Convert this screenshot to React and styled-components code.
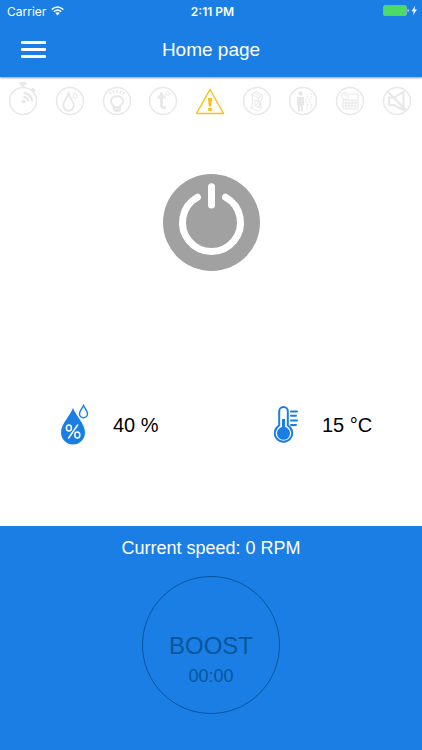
import React from 'react';
import styled, { createGlobalStyle } from 'styled-components';

const BLUE = '#1b7ee4';

export default class App extends React.Component {
  render() {
    return (
      <Page>
        <GlobalStyle />
        <Header>
          <StatusBar>
            <Carrier>
              Carrier
              <WifiIcon />
            </Carrier>
            <Clock>2:11 PM</Clock>
            <Power>
              <BatteryIcon />
            </Power>
          </StatusBar>
          <NavBar>
            <MenuButton type="button" aria-label="Menu">
              <MenuLine />
              <MenuLine />
              <MenuLine />
            </MenuButton>
            <Title>Home page</Title>
          </NavBar>
        </Header>
        <Indicators>
          {indicators.map(({ name, active, icon }) => (
            <Indicator key={name} $active={active}>
              <svg width="34" height="38" viewBox="0 0 34 38" role="img" aria-label={name}>
                {!active && <circle cx="17" cy="21" r="13.5" strokeWidth="1.5" />}
                {icon}
              </svg>
            </Indicator>
          ))}
        </Indicators>
        <Main>
          <PowerButton type="button" aria-label="Power">
            <svg width="97" height="97" viewBox="0 0 97 97">
              <path d="M34.5 23.2A29 29 0 1 0 62.5 23.2" />
              <path d="M48.5 12.8V31" />
            </svg>
          </PowerButton>
        </Main>
        <Readings>
          <Reading>
            <HumidityIcon />
            40 %
          </Reading>
          <Reading>
            <ThermometerIcon />
            15 °C
          </Reading>
        </Readings>
        <SpeedPanel>
          <Speed>Current speed: 0 RPM</Speed>
          <BoostButton type="button">
            <BoostLabel>BOOST</BoostLabel>
            <BoostTime>00:00</BoostTime>
          </BoostButton>
        </SpeedPanel>
      </Page>
    );
  }
}

const WifiIcon = () => (
  <svg width="13" height="10" viewBox="0 0 13 10" fill="none" stroke="#fff" strokeWidth="1.5">
    <path d="M.7 3.6Q6.5-1.7 12.3 3.6" />
    <path d="M2.8 5.8Q6.5 2.5 10.2 5.8" />
    <path d="M4.3 7.1Q6.5 5.4 8.7 7.1L6.5 9.5Z" fill="#fff" stroke="none" />
  </svg>
);

const BatteryIcon = () => (
  <svg width="35" height="12" viewBox="0 0 35 12">
    <rect x=".5" y=".5" width="23" height="10" rx="1.5" fill="#4cd964" stroke="#6fb2c4" />
    <path d="M24.5 4q1.5.2 1.5 1.5t-1.5 1.5z" fill="#b5dcf8" />
    <path d="M32.2.8L28.5 6.2h2.3l-.9 4 4.1-5.6h-2.4z" fill="#fff" />
  </svg>
);

const HumidityIcon = () => (
  <svg width="28" height="41" viewBox="0 0 28 41" fill="none">
    <path d="M12 4C9 12 0 20 0 28.5a12 12 0 0 0 24 0C24 20 15 12 12 4Z" fill={BLUE} />
    <path
      d="M22.5 1.5C21 4.8 18.5 6.9 18.5 9.7a4 4 0 0 0 8 0c0-2.8-2.5-4.9-4-8.2Z"
      stroke={BLUE}
      strokeWidth="1.5"
    />
    <g stroke="#fff" strokeWidth="1.5">
      <ellipse cx="7.9" cy="24" rx="2.5" ry="3" />
      <ellipse cx="16.3" cy="31" rx="2.5" ry="3" />
      <path d="M17 20.5L7.3 34.5" />
    </g>
  </svg>
);

const ThermometerIcon = () => (
  <svg width="24" height="38" viewBox="0 0 24 38" fill="none" stroke={BLUE} strokeWidth="2">
    <path d="M5.2 19.5V5.3a4.3 4.3 0 0 1 8.6 0V19.5a8.7 8.7 0 1 1-8.6 0Z" />
    <circle cx="9.5" cy="27.3" r="6.5" fill={BLUE} stroke="none" />
    <path d="M9.5 13V27" strokeWidth="3" />
    <path d="M17 5.5H23M17 9.8H22M17 14.5H23M17 19H22" strokeLinecap="round" />
  </svg>
);

const indicators = [
  {
    name: 'Timer',
    icon: (
      <>
        <path d="M13.5 3.5h7M17 3v5M26 8.5l3 3" strokeWidth="3" />
        <path d="M17.5 13a8.5 8.5 0 0 1 8.5 8.5M17.5 17a4.5 4.5 0 0 1 4.5 4.5" strokeWidth="2.5" />
        <circle cx="17.5" cy="21.5" r="1.5" fill="currentColor" />
      </>
    ),
  },
  {
    name: 'Humidity',
    icon: (
      <>
        <path d="M15.5 13.5C14 18 10.3 21 10.3 25.5a5.2 5.2 0 0 0 10.4 0C20.7 21 17 18 15.5 13.5Z" strokeWidth="2" />
        <path d="M22 12.5q-4.3 5.5 0 5.7 4.3-.2 0-5.7Z" />
      </>
    ),
  },
  {
    name: 'Light',
    icon: (
      <>
        <path
          d="M14 30v-4.2c-5.2-3-3.2-9.6 3-9.6s8.2 6.6 3 9.6V30q-3 3-6 0ZM14 27h6M14 29.5h6"
          strokeWidth="2"
        />
        <path d="M9.5 12l1.7 2.5M13 10.5l1 3M17 10v3M21 10.5l-1 3M24.5 12l-1.7 2.5" strokeWidth="1.5" />
      </>
    ),
  },
  {
    name: 'Temperature',
    icon: (
      <>
        <path d="M15.5 12.5v12.5q0 3.5 4.5 2.3M11.5 17h8" strokeWidth="3" />
        <circle cx="21.5" cy="13.5" r="1.8" />
      </>
    ),
  },
  {
    name: 'Warning',
    active: true,
    icon: (
      <>
        <path d="M17 9.5L30.5 33.5H3.5Z" strokeLinejoin="round" strokeWidth="1.5" />
        <path d="M14.9 18h4.2l-.9 8.5h-2.4zM15.2 28h3.6v3h-3.6z" fill="currentColor" stroke="none" />
      </>
    ),
  },
  {
    name: 'Filter',
    icon: (
      <>
        <path d="M12 14l4-3 6 4v4l-2 3 1 7-3 2-7-3q3-6 1-14ZM12 14l6 4 4-3M18 18v5l-3 3" />
        <path d="M15 20l5 2-1 6-4-3zM14 12.5l6 3.5" />
      </>
    ),
  },
  {
    name: 'Presence',
    icon: (
      <>
        <circle cx="14.5" cy="13.5" r="2.3" fill="currentColor" stroke="none" />
        <path d="M11 17h7v8h-1v6.5h-2v-5.5h-1V31.5h-2v-6.5h-1Z" fill="currentColor" stroke="none" />
        <path d="M20.5 13q2 2.5 0 5t0 5 0 6M24.5 13q2 2.5 0 5t0 5 0 6" strokeDasharray="2 1" />
      </>
    ),
  },
  {
    name: 'Schedule',
    icon: (
      <>
        <circle cx="12" cy="16" r="3.5" />
        <path d="M12 14v2h2M16 14h9v15H10v-9M10 20h15M10 23h15M10 26h15M13 20v9M16 20v9M19 20v9M22 20v9" />
      </>
    ),
  },
  {
    name: 'Muted',
    icon: (
      <>
        <path d="M9 17.5h5l9.5-5.5v18L14 25H9Z" strokeWidth="2" />
        <path d="M7.5 11.5L26.5 30.5" strokeWidth="2" />
      </>
    ),
  },
];

const GlobalStyle = createGlobalStyle`
  * {
    box-sizing: border-box;
  }

  body {
    margin: 0;
    background: #fff;
    font-family: 'Liberation Sans', Arial, sans-serif;
  }

  button {
    padding: 0;
    border: 0;
    background: transparent;
    font-family: inherit;
    cursor: pointer;
  }

  svg {
    display: block;
  }
`;

const Page = styled.div`
  display: flex;
  flex-direction: column;
  min-height: 100vh;
`;

const Header = styled.header`
  background: ${BLUE};
  color: #fff;
  box-shadow: 0 1px 2px rgba(0, 0, 0, 0.4);
`;

const StatusBar = styled.div`
  display: grid;
  grid-template-columns: 1fr auto 1fr;
  align-items: center;
  height: 22px;
  padding: 0 4px 0 7px;
  font-family: Inter, sans-serif;
  font-size: 12px;
`;

const Carrier = styled.div`
  display: flex;
  align-items: center;
  gap: 5px;
`;

const Clock = styled.div`
  font-weight: 600;
`;

const Power = styled.div`
  display: flex;
  justify-content: flex-end;
`;

const NavBar = styled.nav`
  display: grid;
  grid-template-columns: 1fr auto 1fr;
  align-items: center;
  height: 55px;
  padding: 0 21px;
`;

const MenuButton = styled.button`
  display: flex;
  flex-direction: column;
  gap: 4px;
  width: 25px;
`;

const MenuLine = styled.span`
  height: 3px;
  border-radius: 1px;
  background: #fff;
`;

const Title = styled.h1`
  margin: 0;
  font-size: 19px;
  font-weight: 400;
  line-height: 24px;
`;

const Indicators = styled.ul`
  display: grid;
  grid-template-columns: repeat(9, 1fr);
  margin: 0;
  padding: 3px 2px 2px 0;
  list-style: none;
`;

const Indicator = styled.li`
  display: flex;
  justify-content: center;
  color: ${props => (props.$active ? '#f9c21c' : '#e8e8e8')};

  svg {
    fill: none;
    stroke: currentColor;
  }
`;

const Main = styled.main`
  display: flex;
  flex: 1;
  flex-direction: column;
  align-items: center;
  padding: 54px 0;
`;

const PowerButton = styled.button`
  border-radius: 50%;
  background: #a1a1a1;

  svg {
    fill: none;
    stroke: #fff;
    stroke-width: 7px;
    stroke-linecap: round;
  }
`;

const Readings = styled.section`
  display: grid;
  grid-template-columns: 1fr 1fr;
  column-gap: 4px;
  padding-bottom: 81px;
`;

const Reading = styled.div`
  display: flex;
  align-items: center;
  gap: 24px;
  padding-left: 61px;
  color: #000;
  font-size: 20px;
  line-height: 24px;
`;

const SpeedPanel = styled.section`
  display: flex;
  flex-direction: column;
  align-items: center;
  gap: 16px;
  padding: 10px 0 36px;
  background: ${BLUE};
`;

const Speed = styled.div`
  color: #fff;
  font-size: 18px;
  line-height: 24px;
`;

const BoostButton = styled.button`
  display: flex;
  flex-direction: column;
  align-items: center;
  justify-content: center;
  width: 138px;
  height: 138px;
  padding-top: 30px;
  border: 1px solid #07569b;
  border-radius: 50%;
  color: #07569b;
`;

const BoostLabel = styled.span`
  font-size: 24px;
  line-height: 32px;
`;

const BoostTime = styled.span`
  font-size: 18px;
  line-height: 28px;
`;
